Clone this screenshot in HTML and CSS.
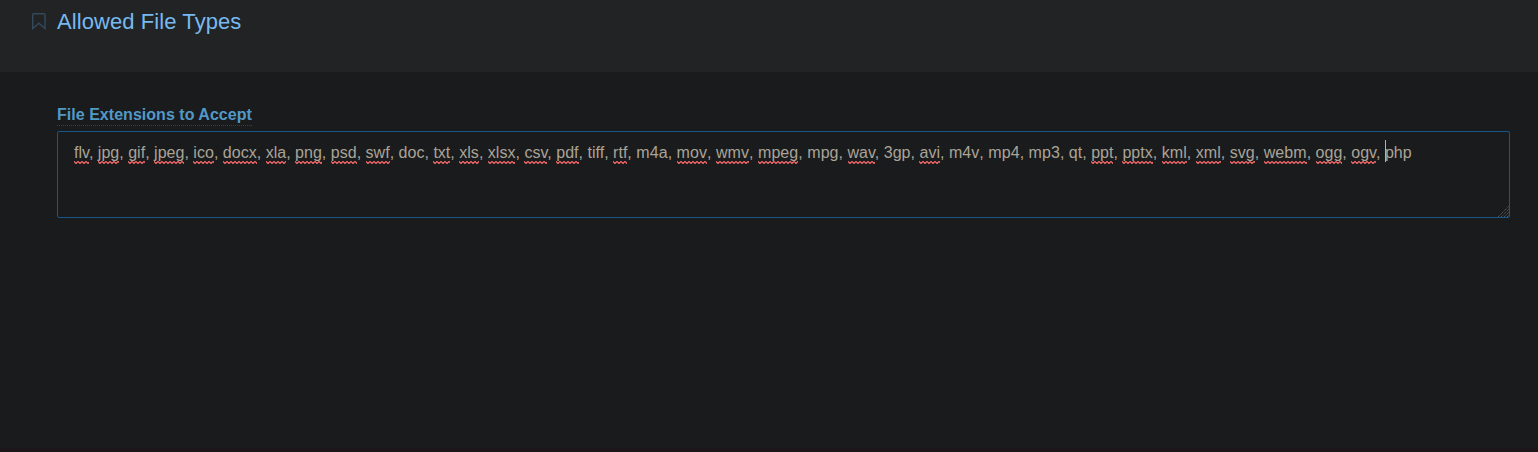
FILE: index.html
```html
<!DOCTYPE html>
<html lang="en">
<head>
<meta charset="utf-8">
<title>Allowed File Types</title>
<link rel="stylesheet" href="styles.css">
</head>
<body>
<header class="section-header">
<svg class="bookmark" width="14" height="17" viewBox="0 0 14 17" fill="none"><path d="M.7 1.5Q.7.7 1.5.7H12.2Q13 .7 13 1.5V15.5L6.9 10.2L.7 15.5Z"/></svg>
<h1 class="section-title">Allowed File Types</h1>
</header>
<main class="section-body">
<label class="field-label">File Extensions to Accept</label>
<div class="field">
<p class="field-text"><u>flv</u>, <u>jpg</u>, <u>gif</u>, <u>jpeg</u>, <u>ico</u>, <u>docx</u>, <u>xla</u>, <u>png</u>, <u>psd</u>, <u>swf</u>, doc, <u>txt</u>, <u>xls</u>, <u>xlsx</u>, <u>csv</u>, <u>pdf</u>, tiff, <u>rtf</u>, <span class="wide">m4a</span>, <u class="wide">mov</u>, <u class="wide">wmv</u>, <u class="wide">mpeg</u>, <span class="wide">mpg</span>, <u>wav</u>, 3gp, <u>avi</u>, <span class="wide">m4v</span>, <span class="wide">mp4</span>, <span class="wide">mp3</span>, qt, <u>ppt</u>, <u>pptx</u>, <u class="wide">kml</u>, <u class="wide">xml</u>, <u>svg</u>, <u class="wide">webm</u>, <u>ogg</u>, <u>ogv</u>, <span class="caret"></span>php</p>
<svg class="grip" width="11" height="11" viewBox="0 0 11 11"><path d="M0 11L11 0M3 11L11 3M6 11L11 6M9 11L11 9"/></svg>
</div>
</main>
</body>
</html>
```
FILE: styles.css
```css
* { box-sizing: border-box; }
body {
  margin: 0;
  height: 452px;
  display: flex;
  flex-direction: column;
  overflow: hidden;
  background: #1a1b1d;
  font-family: "Liberation Sans", Arial, sans-serif;
}
.section-header {
  display: flex;
  align-items: flex-start;
  gap: 11px;
  height: 72px;
  padding: 8px 32px;
  background: #212324;
}
.bookmark { margin-top: 5px; stroke: #34495c; stroke-width: 1.4; }
.section-title {
  margin: 0;
  color: #77b9f0;
  font-size: 22px;
  font-weight: 400;
  line-height: 27px;
  letter-spacing: .08px;
}
.section-body {
  flex: 1;
  padding: 33px 28px 0 57px;
  border-bottom: 4px solid #1c1519;
}
.field-label {
  display: block;
  width: fit-content;
  height: 21px;
  line-height: 19px;
  color: #5299c8;
  font-size: 16px;
  font-weight: 700;
  letter-spacing: .03px;
  border-bottom: 1px dotted #24502f;
}
.field {
  position: relative;
  height: 87px;
  margin-top: 5px;
  padding: 11px 16px;
  border: 1px solid #17568a;
  border-radius: 2px;
}
.field-text {
  margin: 0;
  color: #aaa498;
  font-size: 16px;
  line-height: 19px;
  letter-spacing: .02px;
  white-space: nowrap;
}
.wide { letter-spacing: .07px; }
.field-text u {
  text-decoration: none;
  padding-bottom: 3px;
  background: url("data:image/svg+xml,%3Csvg xmlns='http://www.w3.org/2000/svg' width='4' height='3'%3E%3Cpath d='M-2 2.5L0 .5L2 2.5L4 .5L6 2.5' fill='none' stroke='%23ff6b6b' stroke-width='1.2'/%3E%3C/svg%3E") left bottom repeat-x;
}
.caret {
  display: inline-block;
  width: 1px;
  height: 22px;
  margin: -4px -1px -4px 0;
  vertical-align: 0;
  background: #b8b2a6;
}
.grip {
  position: absolute;
  right: 0;
  bottom: 0;
  stroke: #55575a;
  stroke-width: 1;
  stroke-dasharray: 1.4 .6;
}
```
